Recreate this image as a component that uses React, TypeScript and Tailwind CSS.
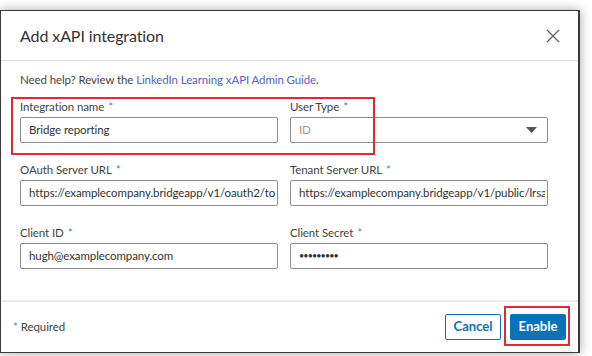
import React from "react";

const Star = () => <span className="ml-[4px] text-[#3a8fd0]">*</span>;

const Field = ({
  label,
  value,
  muted,
  select,
  secret,
}: {
  label: string;
  value: string;
  muted?: boolean;
  select?: boolean;
  secret?: boolean;
}) => (
  <div className="flex flex-col">
    <label className="mb-[2px] h-[16px] text-[11.5px] leading-[16px] tracking-[-0.1px] text-[#444]">
      {label}
      <Star />
    </label>
    <div className="flex h-[26px] items-center overflow-hidden rounded-[2px] border border-[#8c8c8c] bg-white pl-[8px] pr-[2px]">
      <span
        className={`min-w-0 flex-1 overflow-hidden whitespace-nowrap leading-[16px] ${
          secret ? "text-[9px] tracking-[-0.9px]" : "text-[11.5px] tracking-[-0.1px]"
        } ${muted ? "text-[#9a9a9a]" : "text-[#333]"}`}
      >
        {value}
      </span>
      {select && (
        <svg width="11" height="6" viewBox="0 0 11 6" className="mr-[8px]">
          <path d="M0 0 L11 0 L5.5 6 Z" fill="#555" />
        </svg>
      )}
    </div>
  </div>
);

export default function App() {
  return (
    <div
      className="relative h-[356px] w-[592px] overflow-hidden bg-white"
      style={{ fontFamily: 'Lato, "Liberation Sans", sans-serif' }}
    >
      <div className="mt-[10px] flex h-[343px] w-[580px] flex-col border-l-[1px] border-t-[1px] border-r-[2px] border-b-[1px] border-[#3a3a3a] bg-white shadow-[0_0_10px_rgba(0,0,0,0.35)]">
        {/* Header */}
        <div className="flex h-[50px] items-center justify-between border-b border-[#e0e0e0] pl-[19px] pr-[18px]">
          <h1 className="text-[16px] leading-[24px] tracking-[-0.1px] text-[#333]">
            Add xAPI integration
          </h1>
          <svg width="14" height="14" viewBox="0 0 14 14">
            <path d="M1 1 L13 13 M13 1 L1 13" stroke="#666" strokeWidth="1.4" />
          </svg>
        </div>

        {/* Body */}
        <div className="flex-1 pl-[19px] pr-[30px] pt-[11px]">
          <p className="mb-[11px] h-[16px] text-[11.5px] leading-[16px] tracking-[-0.1px] text-[#444]">
            Need help? Review the{" "}
            <span className="text-[#5661c9]">LinkedIn Learning xAPI Admin Guide</span>.
          </p>
          <div className="grid grid-cols-2 gap-x-[12px] gap-y-[19px]">
            <Field label="Integration name" value="Bridge reporting" />
            <Field label="User Type" value="ID" muted select />
            <Field
              label="OAuth Server URL"
              value="https://examplecompany.bridgeapp/v1/oauth2/tol"
            />
            <Field
              label="Tenant Server URL"
              value="https://examplecompany.bridgeapp/v1/public/lrsa"
            />
            <Field label="Client ID" value="hugh@examplecompany.com" />
            <Field label="Client Secret" value="•••••••••" secret />
          </div>
        </div>

        {/* Footer */}
        <div className="flex h-[52px] items-center justify-between border-t-[2px] border-[#ebebeb] pl-[12px] pr-[12px]">
          <span className="text-[11.5px] leading-[16px] tracking-[-0.1px] text-[#444]">
            <span className="mr-[3px] text-[#3a8fd0]">*</span>Required
          </span>
          <div className="flex gap-[9px]">
            <button className="h-[26px] w-[56px] rounded-[2px] border border-[#0a73b7] bg-white text-[13px] font-bold text-[#0a73b7]">
              Cancel
            </button>
            <button className="h-[26px] w-[56px] rounded-[2px] bg-[#0a73b7] text-[13px] font-bold text-white">
              Enable
            </button>
          </div>
        </div>
      </div>

      {/* Annotation boxes */}
      <div className="pointer-events-none absolute left-[11px] top-[97px] h-[58px] w-[364px] border-2 border-[#e02a36]" />
      <div className="pointer-events-none absolute left-[504px] top-[306px] h-[40px] w-[66px] border-2 border-[#e02a36]" />
    </div>
  );
}
